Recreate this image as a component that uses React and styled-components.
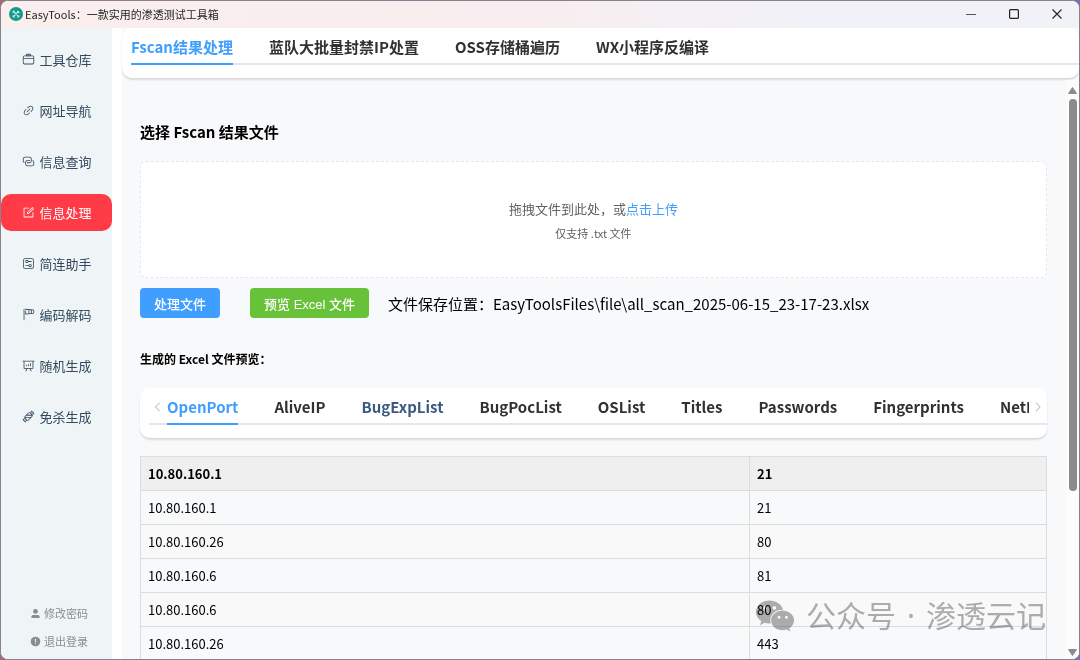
import { useState } from "react";
import styled, { createGlobalStyle } from "styled-components";
import { FaWeixin } from "react-icons/fa";

const menuItems = [
    { label: "工具仓库", icon: "suitcase" },
    { label: "网址导航", icon: "link" },
    { label: "信息查询", icon: "connection" },
    { label: "信息处理", icon: "edit" },
    { label: "简连助手", icon: "setup" },
    { label: "编码解码", icon: "wind" },
    { label: "随机生成", icon: "board" },
    { label: "免杀生成", icon: "sugar" },
];

const pageTabs = ["Fscan结果处理", "蓝队大批量封禁IP处置", "OSS存储桶遍历", "WX小程序反编译"];

const sheetTabs = [
    "OpenPort",
    "AliveIP",
    "BugExpList",
    "BugPocList",
    "OSList",
    "Titles",
    "Passwords",
    "Fingerprints",
    "NetInfo",
];

const rows = [
    ["10.80.160.1", "21"],
    ["10.80.160.26", "80"],
    ["10.80.160.6", "81"],
    ["10.80.160.6", "80"],
    ["10.80.160.26", "443"],
];

// all icons are drawn on a 1024 grid
const iconPaths = {
    suitcase: [
        "M128 384h768v-64a64 64 0 0 0-64-64H192a64 64 0 0 0-64 64zm0 64v320a64 64 0 0 0 64 64h640a64 64 0 0 0 64-64V448zm64-256h640a128 128 0 0 1 128 128v448a128 128 0 0 1-128 128H192A128 128 0 0 1 64 768V320a128 128 0 0 1 128-128",
        "M384 128v64h256v-64zm0-64h256a64 64 0 0 1 64 64v64a64 64 0 0 1-64 64H384a64 64 0 0 1-64-64v-64a64 64 0 0 1 64-64",
    ],
    link: [
        "M715.648 625.152 670.4 579.904l90.496-90.56c75.008-74.944 85.12-186.368 22.656-248.896-62.528-62.464-173.952-52.352-248.96 22.656L444.16 353.6l-45.248-45.248 90.496-90.496c100.032-99.968 251.968-110.08 339.456-22.656 87.488 87.488 77.312 239.424-22.656 339.456zm-90.496 90.496-90.496 90.496C434.624 906.112 282.688 916.224 195.2 828.8c-87.488-87.488-77.312-239.424 22.656-339.456l90.496-90.496 45.248 45.248-90.496 90.56c-75.008 74.944-85.12 186.368-22.656 248.896 62.528 62.464 173.952 52.352 248.96-22.656l90.496-90.496zm0-362.048 45.248 45.248L398.848 670.4 353.6 625.152z",
    ],
    connection: [
        "M640 384v64H448a128 128 0 0 0-128 128v128a128 128 0 0 0 128 128h320a128 128 0 0 0 128-128V576a128 128 0 0 0-64-110.848V394.88c74.56 26.368 128 97.472 128 181.056v128a192 192 0 0 1-192 192H448a192 192 0 0 1-192-192V576a192 192 0 0 1 192-192z",
        "M384 640v-64h192a128 128 0 0 0 128-128V320a128 128 0 0 0-128-128H256a128 128 0 0 0-128 128v128a128 128 0 0 0 64 110.848v70.272A192 192 0 0 1 64 448V320a192 192 0 0 1 192-192h320a192 192 0 0 1 192 192v128a192 192 0 0 1-192 192z",
    ],
    edit: [
        "M832 512a32 32 0 1 1 64 0v352a32 32 0 0 1-32 32H160a32 32 0 0 1-32-32V160a32 32 0 0 1 32-32h352a32 32 0 0 1 0 64H192v640h640z",
        "m470 554.24 52.8-7.552L847.104 222.4a32 32 0 1 0-45.248-45.248L477.44 501.44zm422.4-422.4a96 96 0 0 1 0 135.808l-331.84 331.84a32 32 0 0 1-18.112 9.088L436.8 623.68a32 32 0 0 1-36.224-36.224l15.104-105.6a32 32 0 0 1 9.024-18.112l331.904-331.84a96 96 0 0 1 135.744 0z",
    ],
    setup: [
        "M224 160a64 64 0 0 0-64 64v576a64 64 0 0 0 64 64h576a64 64 0 0 0 64-64V224a64 64 0 0 0-64-64zm0-64h576a128 128 0 0 1 128 128v576a128 128 0 0 1-128 128H224A128 128 0 0 1 96 800V224A128 128 0 0 1 224 96",
        "M384 416a64 64 0 1 0 0-128 64 64 0 0 0 0 128m0 64a128 128 0 1 1 0-256 128 128 0 0 1 0 256",
        "M480 320h256a32 32 0 0 1 0 64H480zM640 736a64 64 0 1 0 0-128 64 64 0 0 0 0 128m0 64a128 128 0 1 1 0-256 128 128 0 0 1 0 256",
        "M288 640h256v64H288a32 32 0 0 1 0-64",
    ],
    wind: [
        "M160 64q32 0 32 32v832q0 32-32 32t-32-32V96q0-32 32-32m416 354.624 128-11.584V168.96l-128-11.52zm-64 5.824V151.552L320 134.08V160h-64V64l616.704 56.064A96 96 0 0 1 960 215.68v144.64a96 96 0 0 1-87.296 95.616L256 512V224h64v217.92zm256-23.232 98.88-8.96A32 32 0 0 0 896 360.32V215.68a32 32 0 0 0-29.12-31.872l-98.88-8.96z",
    ],
    board: [
        "m665.216 768 110.848 192h-73.856L591.36 768H433.024L322.176 960H248.32l110.848-192H160a32 32 0 0 1-32-32V192H64a32 32 0 0 1 0-64h896a32 32 0 1 1 0 64h-64v544a32 32 0 0 1-32 32zM832 192H192v512h640zM352 448a32 32 0 0 1 32 32v64a32 32 0 0 1-64 0v-64a32 32 0 0 1 32-32m160-64a32 32 0 0 1 32 32v128a32 32 0 0 1-64 0V416a32 32 0 0 1 32-32m160-64a32 32 0 0 1 32 32v192a32 32 0 1 1-64 0V352a32 32 0 0 1 32-32",
    ],
    sugar: [
        "m801.728 349.184 4.48 4.48a128 128 0 0 1 0 180.992L534.656 806.144a128 128 0 0 1-181.056 0l-4.48-4.48-19.392 109.696a64 64 0 0 1-108.288 34.176L78.464 802.56a64 64 0 0 1 34.176-108.288l109.76-19.328-4.544-4.544a128 128 0 0 1 0-181.056l271.488-271.488a128 128 0 0 1 181.056 0l4.48 4.48 19.392-109.504a64 64 0 0 1 108.352-34.048l142.592 143.04a64 64 0 0 1-34.24 108.16zm-548.8 198.72h447.168v2.24l60.8-60.8a63.808 63.808 0 0 0 18.752-44.416h-426.88l-89.664 89.728a64 64 0 0 0-10.24 13.248zm0 64q4.128 7.104 10.176 13.184l135.744 135.744a64 64 0 0 0 90.496 0L638.4 611.904zm490.048-230.976L625.152 263.104a64 64 0 0 0-90.496 0L416.768 380.928zM123.712 757.312l142.976 142.976 24.32-137.6a25.6 25.6 0 0 0-29.696-29.632l-137.6 24.256zm633.6-633.344-24.32 137.472a25.6 25.6 0 0 0 29.632 29.632l137.28-24.064z",
    ],
    user: [
        "M288 320a224 224 0 1 0 448 0 224 224 0 1 0-448 0m544 608H160a32 32 0 0 1-32-32v-96a160 160 0 0 1 160-160h448a160 160 0 0 1 160 160v96a32 32 0 0 1-32 32z",
    ],
    warning: [
        "M512 64a448 448 0 1 1 0 896 448 448 0 0 1 0-896m0 192a58.432 58.432 0 0 0-58.24 63.744l23.36 256.384a35.072 35.072 0 0 0 69.76 0l23.296-256.384A58.432 58.432 0 0 0 512 256m0 512a51.2 51.2 0 1 0 0-102.4 51.2 51.2 0 0 0 0 102.4",
    ],
    left: ["M609.408 149.376 277.76 489.6a32 32 0 0 0 0 44.672l331.648 340.352a29.12 29.12 0 0 0 41.728 0 30.592 30.592 0 0 0 0-42.752L339.264 511.936l311.872-319.872a30.592 30.592 0 0 0 0-42.688 29.12 29.12 0 0 0-41.728 0z"],
    right: ["M340.864 149.312a30.592 30.592 0 0 0 0 42.752L652.736 512 340.864 831.872a30.592 30.592 0 0 0 0 42.752 29.12 29.12 0 0 0 41.728 0L714.24 534.336a32 32 0 0 0 0-44.672L382.592 149.376a29.12 29.12 0 0 0-41.728 0z"],
};

const Icon = ({ name, size = 13 }) => (
    <svg width={size} height={size} viewBox="0 0 1024 1024" fill="currentColor" aria-hidden="true">
        {iconPaths[name].map((d) => (
            <path key={d} d={d} />
        ))}
    </svg>
);

const AppLogo = () => (
    <svg width="14" height="14" viewBox="0 0 28 28" aria-hidden="true">
        <circle cx="14" cy="14" r="14" fill="#16988f" />
        <path d="M9 9l10 10M19 9L9 19" stroke="#c9f2ea" strokeWidth="2.2" strokeLinecap="round" />
        <path d="M8 10l2-2M17 9l3 2M8 18l2 2M18 20l2-2" stroke="#c9f2ea" strokeWidth="2.4" strokeLinecap="round" />
    </svg>
);

const App = () => {
    const [menu, setMenu] = useState("信息处理");
    const [pageTab, setPageTab] = useState(pageTabs[0]);
    const [sheet, setSheet] = useState(sheetTabs[0]);

    return (
        <>
            <GlobalStyle />
            <Window>
                <TitleBar>
                    <AppLogo />
                    <Title>EasyTools：一款实用的渗透测试工具箱</Title>
                    <WindowButton aria-label="minimize">
                        <svg width="10" height="10" viewBox="0 0 10 10">
                            <path d="M0 5.5h10" stroke="#555" />
                        </svg>
                    </WindowButton>
                    <WindowButton aria-label="maximize">
                        <svg width="10" height="10" viewBox="0 0 10 10">
                            <rect x="0.6" y="0.6" width="8.8" height="8.8" rx="1" fill="none" stroke="#222" strokeWidth="1.2" />
                        </svg>
                    </WindowButton>
                    <WindowButton aria-label="close">
                        <svg width="10" height="10" viewBox="0 0 10 10">
                            <path d="M0.5 0.5l9 9M9.5 0.5l-9 9" stroke="#222" strokeWidth="1.1" />
                        </svg>
                    </WindowButton>
                </TitleBar>
                <Body>
                    <Sidebar>
                        <Menu>
                            {menuItems.map((item) => (
                                <MenuButton
                                    key={item.label}
                                    $active={menu === item.label}
                                    onClick={() => setMenu(item.label)}
                                >
                                    <Icon name={item.icon} />
                                    {item.label}
                                </MenuButton>
                            ))}
                        </Menu>
                        <Account>
                            <AccountButton>
                                <Icon name="user" size={11} />
                                修改密码
                            </AccountButton>
                            <AccountButton>
                                <Icon name="warning" size={11} />
                                退出登录
                            </AccountButton>
                        </Account>
                    </Sidebar>
                    <Main>
                        <PageTabs>
                            <TabList>
                                {pageTabs.map((tab) => (
                                    <Tab key={tab} $active={pageTab === tab} onClick={() => setPageTab(tab)}>
                                        {tab}
                                    </Tab>
                                ))}
                            </TabList>
                        </PageTabs>
                        <ScrollArea>
                            <Content>
                                <Heading>选择 Fscan 结果文件</Heading>
                                <DropZone>
                                    <DropText>
                                        拖拽文件到此处，或<a href="#upload">点击上传</a>
                                    </DropText>
                                    <DropHint>仅支持 .txt 文件</DropHint>
                                </DropZone>
                                <Actions>
                                    <ActionButton $color="#409eff">处理文件</ActionButton>
                                    <ActionButton $color="#67c23a">预览 Excel 文件</ActionButton>
                                    <SavePath>
                                        文件保存位置：EasyToolsFiles\file\all_scan_2025-06-15_23-17-23.xlsx
                                    </SavePath>
                                </Actions>
                                <SubHeading>生成的 Excel 文件预览：</SubHeading>
                                <SheetTabs>
                                    <Arrow aria-label="previous">
                                        <Icon name="left" size={12} />
                                    </Arrow>
                                    <TabList>
                                        {sheetTabs.map((tab) => (
                                            <Tab
                                                key={tab}
                                                $active={sheet === tab}
                                                $visited={tab === "BugExpList"}
                                                onClick={() => setSheet(tab)}
                                            >
                                                {tab}
                                            </Tab>
                                        ))}
                                    </TabList>
                                    <Arrow aria-label="next">
                                        <Icon name="right" size={12} />
                                    </Arrow>
                                </SheetTabs>
                                <Table>
                                    <thead>
                                        <tr>
                                            <th>10.80.160.1</th>
                                            <th>21</th>
                                        </tr>
                                    </thead>
                                    <tbody>
                                        {rows.map(([ip, port], i) => (
                                            <tr key={i}>
                                                <td>{ip}</td>
                                                <td>{port}</td>
                                            </tr>
                                        ))}
                                    </tbody>
                                </Table>
                            </Content>
                            <ScrollBar>
                                <svg width="9" height="7" viewBox="0 0 9 7">
                                    <path d="M4.5 0.5L8.5 6.5H0.5z" fill="#8b8b8b" stroke="#8b8b8b" strokeLinejoin="round" />
                                </svg>
                                <ScrollTrack>
                                    <ScrollThumb />
                                </ScrollTrack>
                                <svg width="9" height="7" viewBox="0 0 9 7">
                                    <path d="M4.5 6.5L8.5 0.5H0.5z" fill="#8b8b8b" stroke="#8b8b8b" strokeLinejoin="round" />
                                </svg>
                            </ScrollBar>
                        </ScrollArea>
                    </Main>
                </Body>
                <Watermark>
                    <FaWeixin size={40} />
                    <span>公众号</span>
                    <span>·</span>
                    <span>渗透云记</span>
                </Watermark>
            </Window>
        </>
    );
};

const GlobalStyle = createGlobalStyle`
    * {
        box-sizing: border-box;
    }
    body {
        margin: 0;
        overflow: hidden;
        background: linear-gradient(90deg, #9c6f75, #5d5f94 60%, #6c78a8);
        font-family: "Noto Sans CJK SC", "Noto Sans", sans-serif;
        color: #000;
    }
    button {
        border: none;
        padding: 0;
        background: none;
        font-family: inherit;
        cursor: pointer;
    }
    svg {
        flex: none;
        display: block;
    }
`;

const Window = styled.div`
    position: relative;
    height: 100vh;
    border: 1px solid #8d7f92;
    border-radius: 8px;
    overflow: hidden;
    display: flex;
    flex-direction: column;
    background: #fff;
`;
const TitleBar = styled.header`
    flex: none;
    height: 27px;
    padding: 0 8px 2px;
    display: flex;
    align-items: center;
    background: linear-gradient(90deg, #faefed, #f8eeef 50%, #f1f2f8 75%);
`;
const Title = styled.div`
    flex: 1;
    margin-left: 2px;
    font-size: 11px;
    line-height: 16px;
    color: #1f1f1f;
`;
const WindowButton = styled.button`
    width: 43px;
    height: 26px;
    display: flex;
    align-items: center;
    justify-content: center;
    &:last-child {
        margin-right: -7px;
    }
`;
const Body = styled.div`
    flex: 1;
    min-height: 0;
    display: flex;
    gap: 10px;
`;
const Sidebar = styled.nav`
    flex: none;
    width: 111px;
    padding: 13px 0 4px;
    display: flex;
    flex-direction: column;
    justify-content: space-between;
    background: #eff5f6;
`;
const Menu = styled.div`
    display: flex;
    flex-direction: column;
    gap: 14px;
`;
const MenuButton = styled.button`
    height: 37px;
    padding-left: 1px;
    display: flex;
    align-items: center;
    justify-content: center;
    gap: 4px;
    border-radius: 10px;
    font-size: 13px;
    line-height: 20px;
    color: ${({ $active }) => ($active ? "#fff" : "#34495e")};
    background: ${({ $active }) => ($active ? "#ff3b47" : "transparent")};
`;
const Account = styled.div`
    display: flex;
    flex-direction: column;
`;
const AccountButton = styled.button`
    height: 28px;
    display: flex;
    align-items: center;
    justify-content: center;
    gap: 3px;
    padding-left: 5px;
    font-size: 11px;
    color: #8c8c8c;
`;
const Main = styled.main`
    flex: 1;
    min-width: 0;
    display: flex;
    flex-direction: column;
    background: #f8f9fb;
`;
const TabCard = styled.div`
    flex: none;
    height: 50px;
    border-radius: 10px;
    background: #fff;
    box-shadow: 0 2px 2px rgba(0, 0, 0, 0.12);
`;
const PageTabs = styled(TabCard)`
    padding-left: 9px;
`;
const TabList = styled.div`
    flex: 1;
    min-width: 0;
    height: 37px;
    overflow: hidden;
    display: flex;
    gap: 36px;
    box-shadow: inset 0 -2px #e4e7ed;
`;
const Tab = styled.button`
    flex: none;
    height: 37px;
    padding-top: 3px;
    border-bottom: 2px solid ${({ $active }) => ($active ? "#409eff" : "transparent")};
    font-size: 15px;
    font-weight: 700;
    line-height: 24px;
    color: ${({ $active, $visited }) => ($active ? "#409eff" : $visited ? "#3a5a80" : "#303133")};
`;
const ScrollArea = styled.div`
    flex: 1;
    min-height: 0;
    display: flex;
    overflow: hidden;
    margin-top: 2px;
`;
const Content = styled.div`
    flex: 1;
    min-width: 0;
    padding: 40px 19px 0 18px;
`;
const Heading = styled.h3`
    margin: 0 0 17px;
    font-size: 15px;
    line-height: 24px;
`;
const DropZone = styled.div`
    height: 117px;
    border: 1px dashed #e4e7ed;
    border-radius: 6px;
    background: #fff;
    display: flex;
    flex-direction: column;
    align-items: center;
    justify-content: center;
    gap: 6px;
    color: #606266;
`;
const DropText = styled.div`
    font-size: 13px;
    line-height: 20px;
    a {
        color: #409eff;
        text-decoration: none;
    }
`;
const DropHint = styled.div`
    font-size: 11px;
    line-height: 16px;
`;
const Actions = styled.div`
    margin-top: 10px;
    display: flex;
    align-items: center;
`;
const ActionButton = styled.button`
    height: 30px;
    margin-right: 30px;
    padding: 0 14px;
    border-radius: 4px;
    font-family: "Liberation Sans", "Noto Sans CJK SC", sans-serif;
    font-size: 13px;
    font-weight: 500;
    color: #fff;
    background: ${({ $color }) => $color};
    & + & {
        margin-right: 19px;
    }
`;
const SavePath = styled.span`
    padding-top: 2px;
    font-size: 15px;
    line-height: 24px;
`;
const SubHeading = styled.h4`
    margin: 31px 0 19px;
    font-size: 12px;
    line-height: 20px;
`;
const SheetTabs = styled(TabCard)`
    padding-left: 9px;
    display: flex;
`;
const Arrow = styled.button`
    width: 18px;
    height: 37px;
    display: flex;
    align-items: center;
    justify-content: center;
    color: #a8abb2;
    box-shadow: inset 0 -2px #e4e7ed;
`;
const Table = styled.table`
    width: 100%;
    margin-top: 18px;
    border-collapse: collapse;
    table-layout: fixed;
    font-size: 13px;
    line-height: 20px;
    th,
    td {
        height: 34px;
        padding: 0 7px;
        border: 1px solid #dcdcdc;
        text-align: left;
    }
    th {
        background: #efefef;
    }
    th:last-child {
        width: 297px;
    }
    tbody tr:nth-child(even) {
        background: #f9f9f9;
    }
`;
const ScrollBar = styled.div`
    flex: none;
    width: 13px;
    padding: 7px 0 3px;
    display: flex;
    flex-direction: column;
    align-items: center;
    gap: 5px;
    background: #fcfcfc;
`;
const ScrollTrack = styled.div`
    flex: 1;
    width: 8px;
`;
const ScrollThumb = styled.div`
    height: 72%;
    border-radius: 4px;
    background: #8b8b8b;
`;
const Watermark = styled.div`
    position: absolute;
    right: 33px;
    bottom: 21px;
    display: flex;
    align-items: center;
    gap: 11px;
    font-family: "Noto Sans", "Noto Sans CJK SC", sans-serif;
    font-size: 30px;
    line-height: 44px;
    color: #b0b0b0;
    mix-blend-mode: multiply;
    pointer-events: none;
`;

export default App;
